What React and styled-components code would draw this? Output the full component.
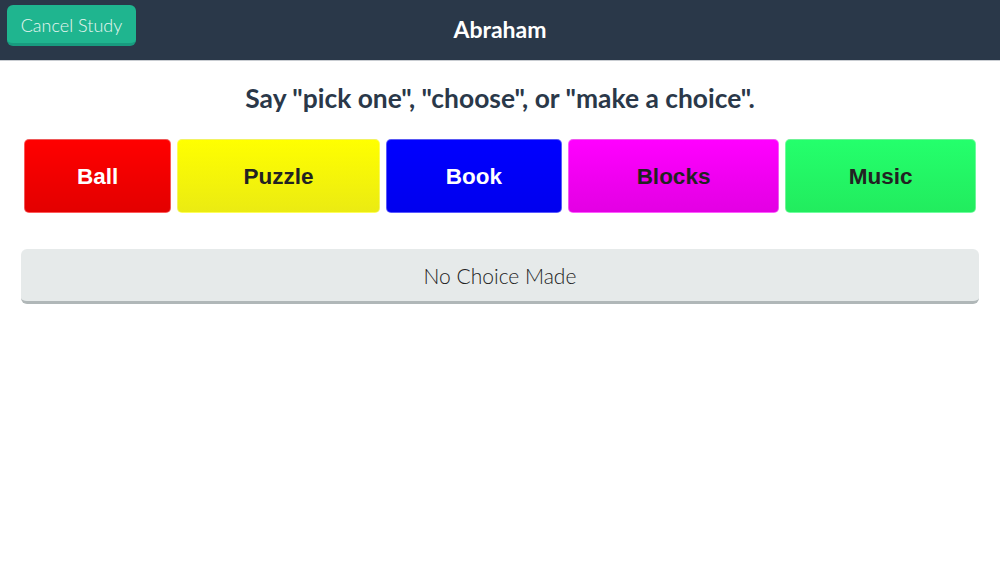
import React from 'react'
import styled, { createGlobalStyle } from 'styled-components'

const GlobalStyle = createGlobalStyle`
  html, body {
    margin: 0;
    padding: 0;
    background: #ffffff;
    font-family: Lato, "Open Sans", sans-serif;
  }
`

const choices = [
  { label: 'Ball', grow: 147, top: '#ff0000', bottom: '#e30000', text: '#ffffff' },
  { label: 'Puzzle', grow: 203, top: '#ffff00', bottom: '#ebeb12', text: '#222222' },
  { label: 'Book', grow: 176, top: '#0000ff', bottom: '#0000ee', text: '#ffffff' },
  { label: 'Blocks', grow: 212, top: '#ff00ff', bottom: '#e300e3', text: '#222222' },
  { label: 'Music', grow: 191, top: '#24ff6c', bottom: '#22ec5e', text: '#222222' },
]

const App = () => {
  return (
    <Page>
      <GlobalStyle />
      <Header>
        <CancelButton>Cancel Study</CancelButton>
        <Title>Abraham</Title>
      </Header>
      <Main>
        <Prompt>Say "pick one", "choose", or "make a choice".</Prompt>
        <ChoiceRow>
          {choices.map((c) => (
            <Choice key={c.label} $grow={c.grow} $top={c.top} $bottom={c.bottom} $text={c.text}>
              {c.label}
            </Choice>
          ))}
        </ChoiceRow>
        <Result>No Choice Made</Result>
      </Main>
    </Page>
  )
}

export default App

const Page = styled.div`
  width: 1000px;
  min-height: 563px;
`

const Header = styled.header`
  position: relative;
  height: 60px;
  background: #2a3849;
  border-bottom: 1px solid #c9cdd2;
  display: flex;
  align-items: center;
  justify-content: center;
`

const CancelButton = styled.button`
  position: absolute;
  left: 7px;
  top: 5px;
  width: 129px;
  height: 41px;
  padding: 2px 0 0;
  border: none;
  border-bottom: 3px solid #189b7f;
  border-radius: 6px;
  background: #1fb58f;
  color: #e8f6f1;
  font-family: Lato, sans-serif;
  font-weight: 300;
  font-size: 18px;
`

const Title = styled.h1`
  margin: 0 0 3px;
  color: #ffffff;
  font-family: Lato, sans-serif;
  font-weight: 700;
  font-size: 23px;
`

const Main = styled.main`
  padding: 18px 21px 0 21px;
  display: flex;
  flex-direction: column;
`

const Prompt = styled.h2`
  margin: 0;
  height: 38px;
  line-height: 38px;
  text-align: center;
  color: #2a3849;
  font-family: Lato, sans-serif;
  font-weight: 700;
  font-size: 26.4px;
`

const ChoiceRow = styled.div`
  display: flex;
  gap: 6px;
  margin: 22px 3px 0 3px;
`

const Choice = styled.button`
  flex: ${(p) => p.$grow} 1 0;
  height: 74px;
  padding: 2px 0 0;
  border: 1px solid rgba(255, 255, 255, 0.35);
  border-radius: 5px;
  background: linear-gradient(to bottom, ${(p) => p.$top}, ${(p) => p.$bottom});
  color: ${(p) => p.$text};
  font-family: "Liberation Sans", Arial, sans-serif;
  font-weight: 700;
  font-size: 22.5px;
`

const Result = styled.div`
  margin-top: 36px;
  height: 52px;
  border-radius: 6px;
  background: #e6eaea;
  border-bottom: 3px solid #b0b7b8;
  display: flex;
  align-items: center;
  justify-content: center;
  color: #222222;
  font-family: Lato, sans-serif;
  font-weight: 300;
  font-size: 21px;
`
